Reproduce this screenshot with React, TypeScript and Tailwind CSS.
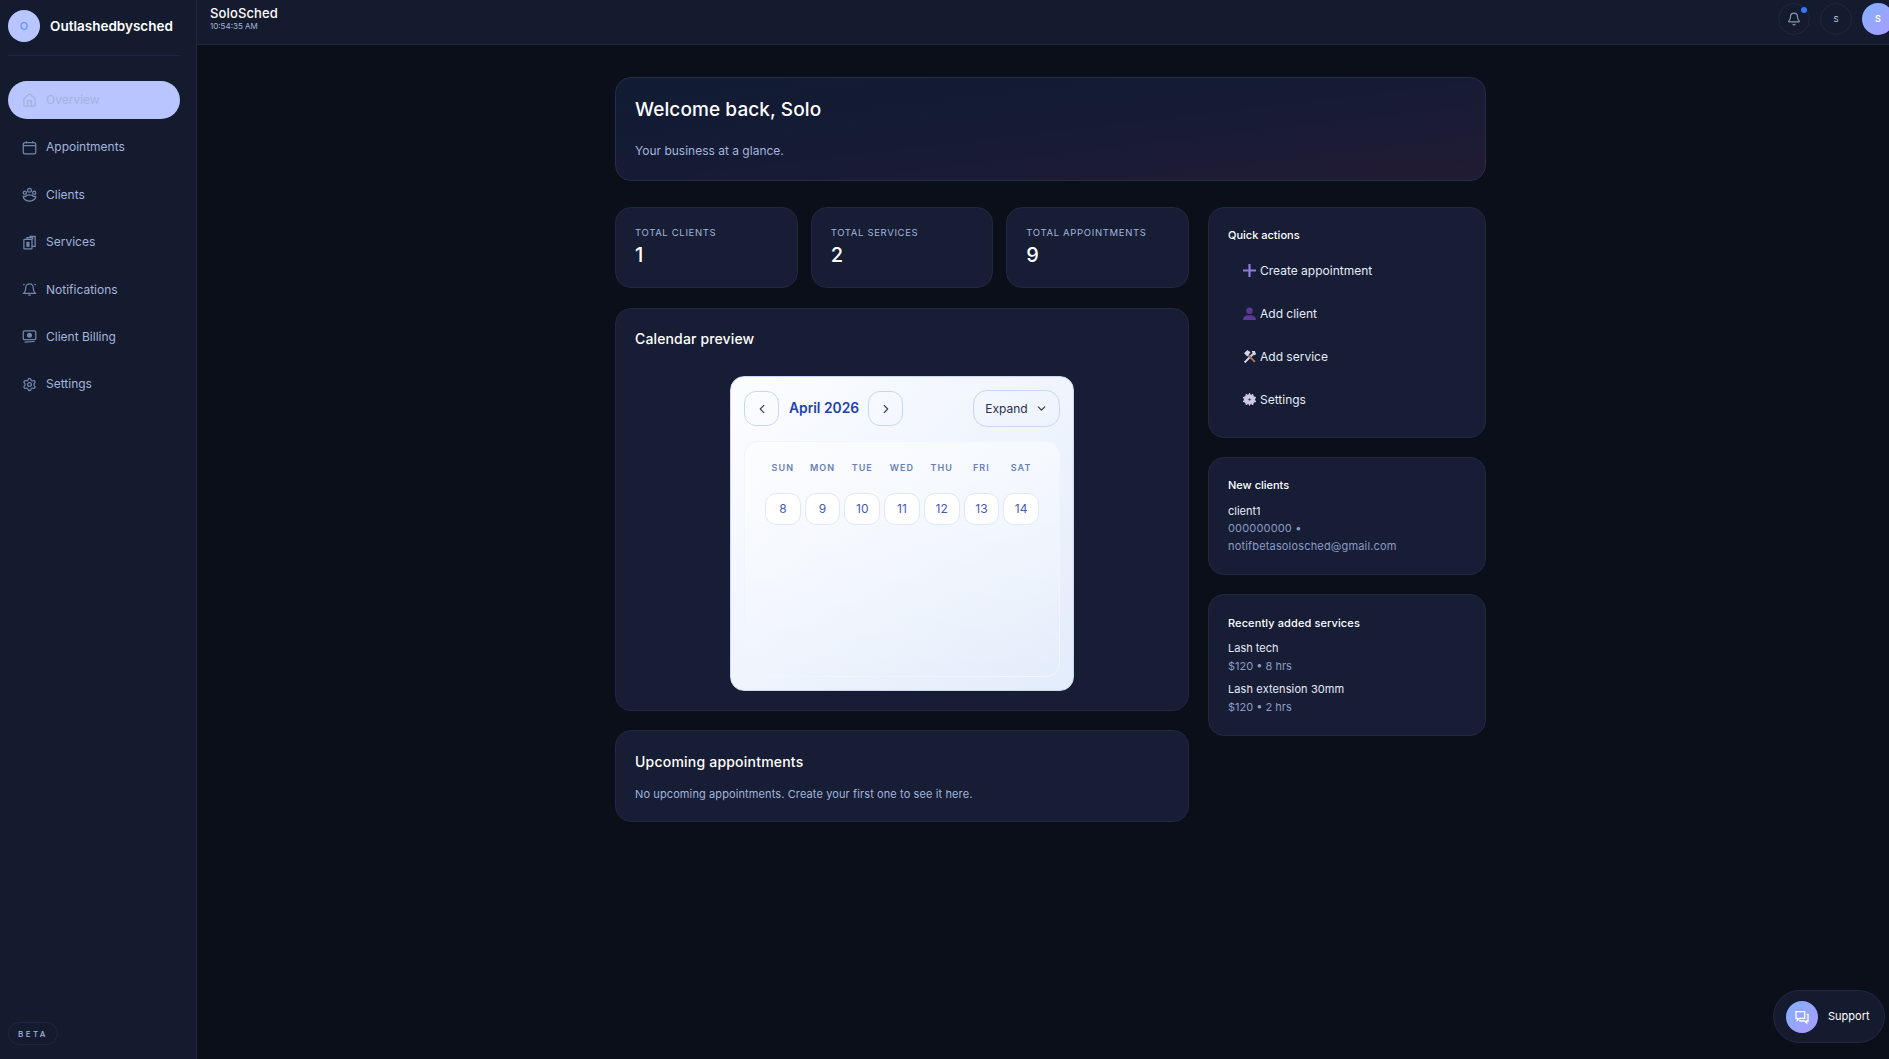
import { Bell, ChevronDown, ChevronLeft, ChevronRight, House, Settings } from "lucide-react";

const font = { fontFamily: "Inter, 'Liberation Sans', sans-serif" };

function CalendarIcon() {
  return (
    <svg width="15" height="15" viewBox="0 0 24 24" fill="none" stroke="currentColor" strokeWidth="2">
      <rect x="2" y="4" width="20" height="18" rx="3" />
      <path d="M2 9h20M7 2v3M17 2v3" />
    </svg>
  );
}

function ClientsIcon() {
  return (
    <svg width="15" height="15" viewBox="0 0 24 24" fill="none" stroke="currentColor" strokeWidth="2">
      <circle cx="12" cy="5" r="3" />
      <circle cx="4.500" cy="9" r="2.500" />
      <circle cx="19.500" cy="9" r="2.500" />
      <path d="M6 21c-2-1-4-2-4-6h4c1-3 11-3 12 0h4c0 4-2 5-4 6-3 1.500-9 1.500-12 0z" />
    </svg>
  );
}

function BillingIcon() {
  return (
    <svg width="15" height="15" viewBox="0 0 24 24" fill="none" stroke="currentColor" strokeWidth="2">
      <rect x="2" y="3" width="20" height="14" rx="2" />
      <circle cx="12" cy="10" r="3" fill="currentColor" />
      <path d="M4 21l16-1" />
    </svg>
  );
}

function ServicesIcon() {
  return (
    <svg width="15" height="15" viewBox="0 0 24 24" fill="none" stroke="currentColor" strokeWidth="2">
      <rect x="3" y="7" width="13" height="15" rx="1" />
      <path d="M8 7V4h9v3M13 4V2h8v16h-5" />
      <rect x="7" y="11" width="5" height="8" fill="currentColor" stroke="none" />
    </svg>
  );
}

function NotifyIcon() {
  return (
    <svg width="15" height="15" viewBox="0 0 24 24" fill="none" stroke="currentColor" strokeWidth="2">
      <path d="M6 9a6 6 0 0 1 12 0c0 6 2 8 3 9H3c1-1 3-3 3-9" />
      <path d="M10 21h4M2 5l2-2M22 5l-2-2" />
    </svg>
  );
}

const navItems = [
  { label: "Appointments", icon: <CalendarIcon /> },
  { label: "Clients", icon: <ClientsIcon /> },
  { label: "Services", icon: <ServicesIcon /> },
  { label: "Notifications", icon: <NotifyIcon /> },
  { label: "Client Billing", icon: <BillingIcon /> },
  { label: "Settings", icon: <Settings size={15} /> },
];

function Sidebar() {
  return (
    <aside className="w-[197px] shrink-0 h-full flex flex-col bg-[#141b2e] border-r border-[#1e2740] pl-2 pr-4">
      <div className="flex items-center gap-[10px] pt-[10px] pb-[13px] border-b border-[#1e2740]">
        <div className="w-8 h-8 rounded-full bg-[#b8c5ff] flex items-center justify-center text-[11px] font-semibold text-[#6f9bff]">
          O
        </div>
        <span className="text-[13.500px] font-semibold text-white">Outlashedbysched</span>
      </div>
      <nav className="flex flex-col mt-[25px] gap-[9.4px]">
        <div className="h-[38px] rounded-[19px] bg-[#b8c5ff] flex items-center gap-[9px] px-[14px] text-[12px] text-[#a3b2dc]">
          <House size={15} />
          Overview
        </div>
        {navItems.map((item) => (
          <div key={item.label} className="h-[38px] flex items-center gap-[9px] px-[14px] text-[12px] text-[#a3b4dc]">
            <span className="text-[#7485ab]">{item.icon}</span>
            {item.label}
          </div>
        ))}
      </nav>
      <div className="mt-auto mb-[14px] w-[50px] h-[23px] rounded-full border border-[#1e2740] flex items-center justify-center text-[8px] font-medium tracking-[0.3em] text-[#a3b4dc]">
        BETA
      </div>
    </aside>
  );
}

function TopBar() {
  return (
    <header className="h-[45px] shrink-0 flex items-start justify-between pl-[13px] pt-[3px] bg-[#141b2e] border-b border-[#1e2740]">
      <div className="flex flex-col pt-[3px]">
        <span className="text-[13px] leading-[15px] font-medium text-white tracking-[0.01em]">SoloSched</span>
        <span className="text-[8px] leading-[10px] text-[#a3b4dc]">10:54:35 AM</span>
      </div>
      <div className="flex items-center gap-[10px] mr-[-5px]">
        <div className="relative w-8 h-8 rounded-full border border-[#1e2740] flex items-center justify-center text-[#8a97b5]">
          <Bell size={14} />
          <span className="absolute top-[3px] right-[2px] w-[6px] h-[6px] rounded-full bg-[#2f7cf6]" />
        </div>
        <div className="w-8 h-8 rounded-full border border-[#1e2740] flex items-center justify-center text-[8px] text-[#c5d0ea]">
          S
        </div>
        <div className="w-8 h-8 rounded-full bg-gradient-to-br from-[#7fb0ff] to-[#a99bff] flex items-center justify-center text-[9px] font-semibold text-white">
          S
        </div>
      </div>
    </header>
  );
}

function Card({ className, children }: { className?: string; children: React.ReactNode }) {
  return <div className={`rounded-[16px] border border-[#1f2942] bg-[#161d35] ${className ?? ""}`}>{children}</div>;
}

function StatCard({ label, value }: { label: string; value: number }) {
  return (
    <Card className="flex-1 h-[81px] px-[19px] pt-[18px]">
      <div className="text-[9.500px] leading-[14px] tracking-[0.07em] text-[#a3b4dc]">{label}</div>
      <div className="text-[20px] leading-[26px] font-medium text-white mt-[2px]">{value}</div>
    </Card>
  );
}

const weekDays = ["SUN", "MON", "TUE", "WED", "THU", "FRI", "SAT"];
const days = [8, 9, 10, 11, 12, 13, 14];

function CalendarWidget() {
  return (
    <div className="w-[344px] h-[315px] mx-auto mt-[27px] rounded-[14px] border border-[#c9d6f5] bg-gradient-to-br from-[#fcfdff] to-[#e3ecfb] px-[13px] pt-[13px]">
      <div className="flex items-center">
        <button className="w-[35px] h-[35px] rounded-[12px] border border-[#c8d6f6] flex items-center justify-center text-[#3b4668]">
          <ChevronLeft size={14} />
        </button>
        <span className="ml-[10px] mr-[9px] text-[13.800px] font-semibold text-[#1e40af]">April 2026</span>
        <button className="w-[35px] h-[35px] rounded-[12px] border border-[#c8d6f6] flex items-center justify-center text-[#3b4668]">
          <ChevronRight size={14} />
        </button>
        <button className="ml-auto w-[87px] h-[37px] rounded-[14px] border border-[#c8d6f6] flex items-center justify-center gap-[7px] text-[12px] text-[#27314f]">
          Expand
          <ChevronDown size={13} />
        </button>
      </div>
      <div className="mt-[14px] h-[236px] rounded-[14px] border border-[#f0f5fe] bg-gradient-to-b from-white/50 to-white/0 px-[20px] pt-[20px]">
        <div className="grid grid-cols-7 gap-[4px]">
          {weekDays.map((d) => (
            <div key={d} className="text-center text-[9px] leading-[12px] font-semibold tracking-[0.12em] text-[#6b7fb5]">
              {d}
            </div>
          ))}
        </div>
        <div className="grid grid-cols-7 gap-[4px] mt-[19px]">
          {days.map((d) => (
            <div key={d} className="h-[32px] rounded-[11px] border border-[#dfe8fb] bg-white flex items-center justify-center text-[12px] text-[#3f5bb5]">
              {d}
            </div>
          ))}
        </div>
      </div>
    </div>
  );
}

function PlusEmoji() {
  return (
    <svg width="13" height="13" viewBox="0 0 12 12">
      <path d="M5 0h2v5h5v2H7v5H5V7H0V5h5z" fill="#8f7bdc" />
    </svg>
  );
}

function UserEmoji() {
  return (
    <svg width="13" height="13" viewBox="0 0 12 12" fill="#5b3a96">
      <circle cx="6" cy="3.500" r="3" />
      <path d="M0 12c0-3 2-4 4-4.500h4c2 .5 4 1.500 4 4.500z" />
    </svg>
  );
}

function ToolsEmoji() {
  return (
    <svg width="13" height="13" viewBox="0 0 12 12" fill="none">
      <path d="M1.500 11.500l8-8" stroke="#d8d5e6" strokeWidth="1.800" />
      <path d="M4 4l7 7" stroke="#a8746c" strokeWidth="1.800" />
      <path d="M1 3l3-3 3 2-3 4z" fill="#d8d5e6" />
      <path d="M8 1l3 0 1 3-2 1z" fill="#d8d5e6" />
    </svg>
  );
}

function GearEmoji() {
  return (
    <svg width="13" height="13" viewBox="0 0 24 24" fill="#cfc9e4" stroke="#cfc9e4" strokeWidth="2">
      <path d="M12 1l2 4 4-2 1 4 4 1-2 4 2 4-4 1-1 4-4-2-2 3-2-3-4 2-1-4-4-1 2-4-2-4 4-1 1-4 4 2z" />
      <circle cx="12" cy="12" r="3" fill="#161d35" />
    </svg>
  );
}

const actions = [
  { label: "Create appointment", icon: <PlusEmoji /> },
  { label: "Add client", icon: <UserEmoji /> },
  { label: "Add service", icon: <ToolsEmoji /> },
  { label: "Settings", icon: <GearEmoji /> },
];

function RightColumn() {
  return (
    <div className="w-[278px] shrink-0 flex flex-col gap-[19px]">
      <Card className="h-[231px] px-[19px] pt-[19px]">
        <div className="text-[11px] leading-[16px] font-medium text-white">Quick actions</div>
        <div className="mt-[6px] flex flex-col">
          {actions.map((a) => (
            <div key={a.label} className="h-[43px] pl-[15px] flex items-center gap-[4px] text-[12px] text-[#e6ebf7]">
              {a.icon}
              {a.label}
            </div>
          ))}
        </div>
      </Card>
      <Card className="h-[118px] px-[19px] pt-[19px]">
        <div className="text-[11px] leading-[16px] font-medium text-white">New clients</div>
        <div className="mt-[10px] text-[11px] leading-[16px] text-[#e6ebf7]">client1</div>
        <div className="text-[11px] leading-[18px] tracking-[0.015em] text-[#8c9bc4]">
          000000000 •<br />
          notifbetasolosched@gmail.com
        </div>
      </Card>
      <Card className="h-[142px] px-[19px] pt-[20px]">
        <div className="text-[11px] leading-[16px] font-medium tracking-[0.01em] text-white">Recently added services</div>
        <div className="mt-[9px] text-[11px] leading-[16px] text-[#e6ebf7]">Lash tech</div>
        <div className="mt-[2px] text-[11px] leading-[16px] text-[#8c9bc4]">$120 • 8 hrs</div>
        <div className="mt-[7px] text-[11px] leading-[16px] tracking-[0.01em] text-[#e6ebf7]">Lash extension 30mm</div>
        <div className="mt-[2px] text-[11px] leading-[16px] text-[#8c9bc4]">$120 • 2 hrs</div>
      </Card>
    </div>
  );
}

export default function App() {
  return (
    <div className="h-screen w-full flex overflow-hidden bg-[#0b0f19]" style={font}>
      <Sidebar />
      <div className="flex-1 min-w-0 flex flex-col relative">
        <TopBar />
        <main className="w-[871px] ml-[418px] mt-[32px] flex flex-col">
          <div className="h-[104px] rounded-[16px] border border-[#252e48] bg-gradient-to-br from-[#101c33] via-[#161b35] to-[#221a33] px-[19px] pt-[18px]">
            <h1 className="text-[19px] leading-[28px] font-medium tracking-[0.005em] text-white">Welcome back, Solo</h1>
            <p className="mt-[19px] text-[12px] leading-[16px] text-[#a3b4dc]">Your business at a glance.</p>
          </div>
          <div className="flex gap-[19px] mt-[26px]">
            <div className="flex-1 min-w-0 flex flex-col gap-[19px]">
              <div className="flex gap-[13px]">
                <StatCard label="TOTAL CLIENTS" value={1} />
                <StatCard label="TOTAL SERVICES" value={2} />
                <StatCard label="TOTAL APPOINTMENTS" value={9} />
              </div>
              <Card className="h-[403px] mt-[1px] px-[19px] pt-[20px]">
                <h2 className="text-[14px] leading-[20px] font-medium tracking-[0.01em] text-white">Calendar preview</h2>
                <CalendarWidget />
              </Card>
              <Card className="h-[92px] px-[19px] pt-[21px]">
                <h2 className="text-[14px] leading-[20px] font-medium tracking-[0.015em] text-white">Upcoming appointments</h2>
                <p className="mt-[14px] text-[11px] leading-[16px] tracking-[0.01em] text-[#a3b4dc]">
                  No upcoming appointments. Create your first one to see it here.
                </p>
              </Card>
            </div>
            <RightColumn />
          </div>
        </main>
        <div className="absolute right-[4px] bottom-[16px] w-[112px] h-[53px] rounded-full border border-[#1f2942] bg-[#141b2e] flex items-center pl-[12px] gap-[10px]">
          <div className="w-8 h-8 rounded-full bg-gradient-to-br from-[#7fb0ff] to-[#a99bff] flex items-center justify-center text-white">
            <svg width="16" height="16" viewBox="0 0 24 24" fill="none" stroke="currentColor" strokeWidth="2">
              <path d="M3 4h13v10H8l-3 3v-3H3z" />
              <path d="M19 8h2v10h-2v3l-3-3H9v-2" />
            </svg>
          </div>
          <span className="text-[11px] text-white">Support</span>
        </div>
      </div>
    </div>
  );
}
